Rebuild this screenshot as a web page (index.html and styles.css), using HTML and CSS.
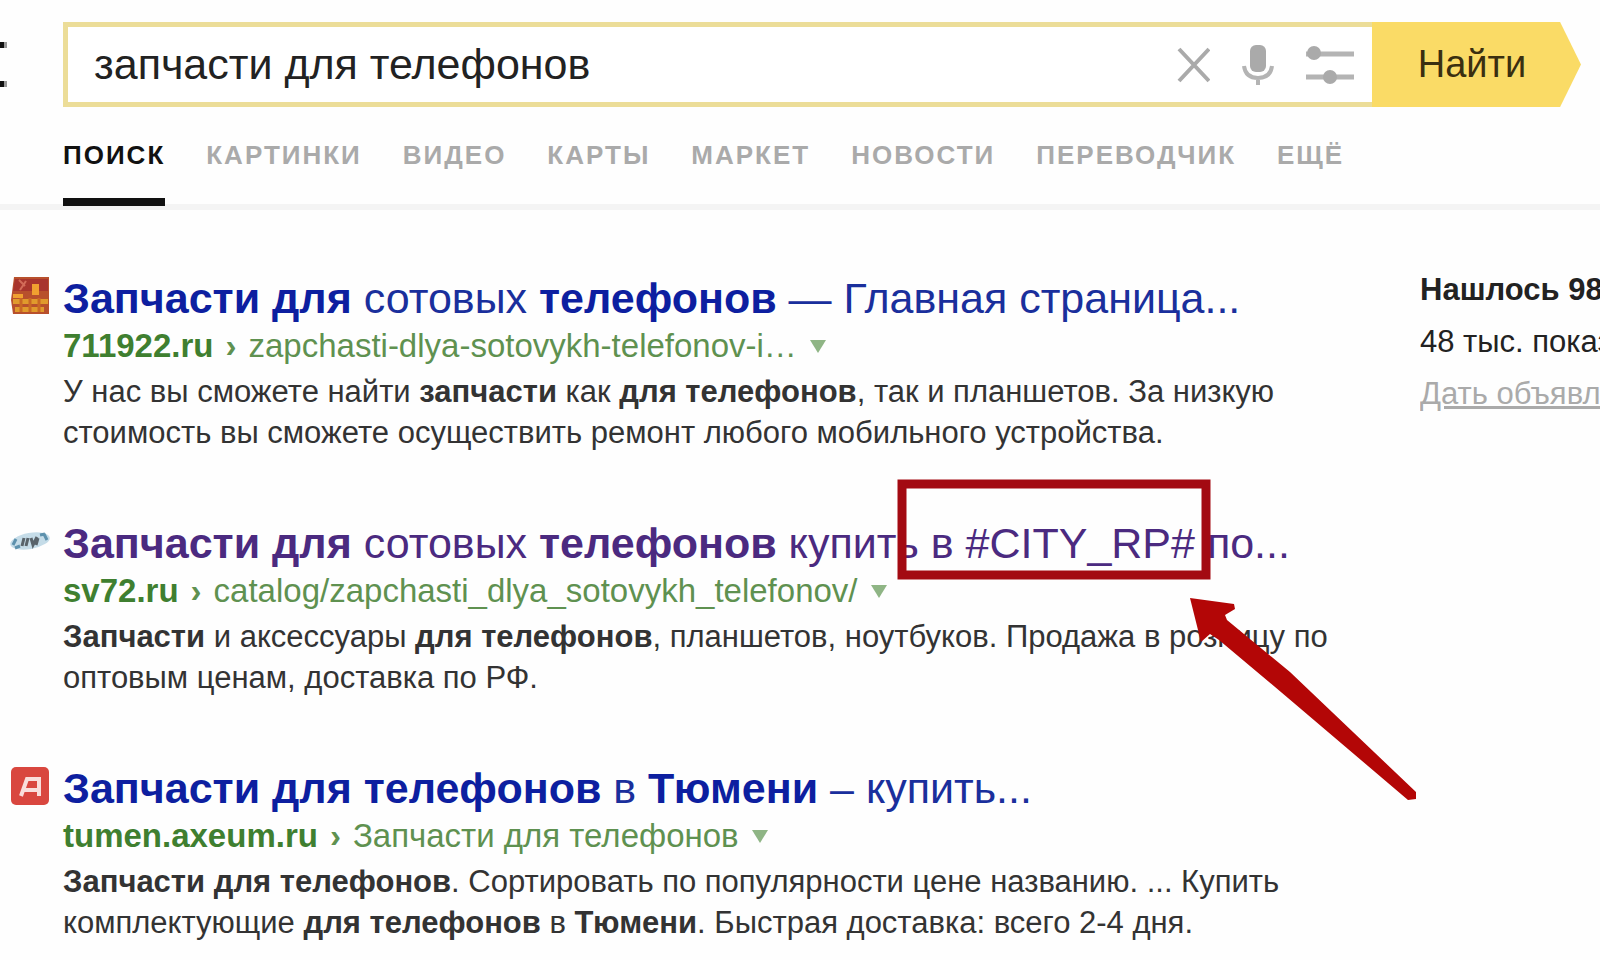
FILE: index.html
```html
<!DOCTYPE html>
<html lang="ru">
<head>
<meta charset="utf-8">
<title>запчасти для телефонов</title>
<link rel="stylesheet" href="styles.css">
</head>
<body>
<header class="header">
  <a class="logo" href="#" aria-label="Главная">
    <svg width="8" height="48" viewBox="0 0 8 48" aria-hidden="true"><path d="M0 1H4V7H0ZM0 40H4V46H0Z" fill="#111"/><path d="M4 1H7V7H4ZM4 40H7V46H4Z" fill="#999"/></svg>
  </a>
  <form class="search">
    <div class="search-box">
      <input class="search-input" type="text" aria-label="Запрос" value="запчасти для телефонов">
      <button class="icon-button" type="button" aria-label="Очистить">
        <svg width="34" height="42" viewBox="0 0 34 42"><path d="M3 5L33 37M33 5L3 37" stroke="#aaa" stroke-width="4" fill="none"/></svg>
      </button>
      <button class="icon-button" type="button" aria-label="Голосовой поиск">
        <svg width="32" height="42" viewBox="0 0 32 42"><rect x="8" y="1" width="16" height="27" rx="6" fill="#aaa"/><path d="M2 22C3 30 8 34 16 34S29 30 30 22M16 34V41" stroke="#b4b4b4" stroke-width="4" fill="none"/></svg>
      </button>
      <button class="icon-button" type="button" aria-label="Настройки">
        <svg width="48" height="42" viewBox="0 0 48 42"><path d="M0 10H48M0 33H48" stroke="#b4b4b4" stroke-width="5"/><circle cx="8" cy="9" r="7" fill="#aaa"/><circle cx="24" cy="33" r="7" fill="#aaa"/></svg>
      </button>
    </div>
    <button class="search-submit" type="submit">Найти</button>
  </form>
</header>
<nav class="tabs">
  <a class="tab tab-active" href="#">ПОИСК</a>
  <a class="tab" href="#">КАРТИНКИ</a>
  <a class="tab" href="#">ВИДЕО</a>
  <a class="tab" href="#">КАРТЫ</a>
  <a class="tab" href="#">МАРКЕТ</a>
  <a class="tab" href="#">НОВОСТИ</a>
  <a class="tab" href="#">ПЕРЕВОДЧИК</a>
  <a class="tab" href="#">ЕЩЁ</a>
</nav>
<div class="content">
  <main class="results">
    <article class="result">
      <svg class="favicon" width="40" height="40" viewBox="0 0 40 40" aria-hidden="true"><path d="M4 1H39V38H3L1 24Z" fill="#b8502c"/><path d="M5 3H38V15H3Z" fill="#a8352d"/><path d="M3 23H38V28H3ZM5 31H34V36H5Z" fill="#e09a2c"/><path d="M22 8H29V19H22ZM3 18H13V22H3Z" fill="#f0a030"/><path d="M11 22V36M20 22V36M29 22V36" stroke="#c96824" stroke-width="3"/><path d="M9 4L15 10M16 5L10 14" stroke="#d36b58" stroke-width="2"/></svg>
      <h2 class="title"><a href="#"><b>Запчасти для</b> сотовых <b>телефонов</b> — Главная страница...</a></h2>
      <p class="path"><a href="#"><b>711922.ru</b><span class="sep">›</span>zapchasti-dlya-sotovykh-telefonov-i…</a><button class="more" type="button" aria-label="Ещё"></button></p>
      <p class="snippet">У нас вы сможете найти <b>запчасти</b> как <b>для телефонов</b>, так и планшетов. За низкую<br>стоимость вы сможете осуществить ремонт любого мобильного устройства.</p>
    </article>
    <article class="result result-visited">
      <svg class="favicon" width="40" height="40" viewBox="0 0 40 40" aria-hidden="true"><ellipse cx="20" cy="20" rx="20" ry="8" fill="#c5dce8" transform="rotate(-10 20 20)"/><path d="M3 24L6 18M5 27L10 25M34 13L37 19M30 14L35 13" stroke="#5d91ad" stroke-width="3"/><path d="M14 17L12 25M18 17L16 25M21 17L23 24L27 16M28 17L26 24" stroke="#59636a" stroke-width="3" fill="none"/></svg>
      <h2 class="title"><a href="#"><b>Запчасти для</b> сотовых <b>телефонов</b> купить в #CITY_RP# по...</a></h2>
      <p class="path"><a href="#"><b>sv72.ru</b><span class="sep">›</span>catalog/zapchasti_dlya_sotovykh_telefonov/</a><button class="more" type="button" aria-label="Ещё"></button></p>
      <p class="snippet"><b>Запчасти</b> и аксессуары <b>для телефонов</b>, планшетов, ноутбуков. Продажа в розницу по<br>оптовым ценам, доставка по РФ.</p>
      <svg class="callout" width="524" height="324" viewBox="0 0 524 324" aria-hidden="true"><rect x="7" y="5" width="304" height="91" fill="none" stroke="#a30a12" stroke-width="9"/><path d="M295 119L339 125L340 130L330 136L332 141L395 193L521 313V320L513 321L393 219L324 161L315 155L306 163Z" fill="#b30606"/></svg>
    </article>
    <article class="result">
      <svg class="favicon" width="40" height="40" viewBox="0 0 40 40" aria-hidden="true"><rect x="1" y="1" width="38" height="38" rx="5" fill="#d9473f"/><path d="M11 30L17 13H29V30M14 24H28" stroke="#f9dedb" stroke-width="4" fill="none"/></svg>
      <h2 class="title"><a href="#"><b>Запчасти для телефонов</b> в <b>Тюмени</b> – купить...</a></h2>
      <p class="path"><a href="#"><b>tumen.axeum.ru</b><span class="sep">›</span>Запчасти для телефонов</a><button class="more" type="button" aria-label="Ещё"></button></p>
      <p class="snippet"><b>Запчасти для телефонов</b>. Сортировать по популярности цене названию. ... Купить<br>комплектующие <b>для телефонов</b> в <b>Тюмени</b>. Быстрая доставка: всего 2-4 дня.</p>
    </article>
  </main>
  <aside class="stats">
    <p><b>Нашлось 98</b></p>
    <p>48 тыс. показов</p>
    <p><a class="ad-link" href="#">Дать объявление</a></p>
  </aside>
</div>
</body>
</html>
```
FILE: styles.css
```css
* { box-sizing: border-box; }
body {
  margin: 0;
  background: #fefefe;
  color: #333;
  font-family: "Liberation Sans", Arial, sans-serif;
  overflow: hidden;
}
a { color: inherit; text-decoration: none; }
h2, p { margin: 0; font-weight: 400; }
button { border: 0; padding: 0; background: none; font: inherit; cursor: pointer; }
svg { display: block; }

.header {
  display: grid;
  grid-template-columns: 63px 1fr;
  align-items: center;
  padding: 22px 19px 0 0;
}
.search { display: flex; }
.search-box {
  flex: 1;
  display: flex;
  align-items: center;
  gap: 32px;
  height: 85px;
  padding: 0 18px 0 26px;
  background: #fff;
  border: 5px solid #ecdd98;
  border-right: 0;
}
.search-input {
  flex: 1;
  min-width: 0;
  border: 0;
  outline: 0;
  padding: 0;
  background: none;
  color: #222;
  font: 43px "Liberation Sans", Arial, sans-serif;
}
.search-submit {
  width: 209px;
  padding-right: 9px;
  background: #fadb66;
  clip-path: polygon(0 0, 90% 0, 100% 50%, 90% 100%, 0 100%);
  color: #3a2f10;
  font-size: 38px;
}

.tabs {
  display: flex;
  gap: 41px;
  margin-top: 30px;
  padding-left: 63px;
  border-bottom: 6px solid #f4f4f4;
}
.tab {
  height: 67px;
  color: #aaa;
  font-size: 26px;
  font-weight: 700;
  line-height: 36px;
  letter-spacing: 2px;
}
.tab-active {
  height: 69px;
  margin-bottom: -2px;
  border-bottom: 8px solid #111;
  color: #111;
}

.content {
  display: grid;
  grid-template-columns: minmax(0, 1360px) minmax(180px, 1fr);
  column-gap: 50px;
  padding: 54px 0 0 10px;
  white-space: nowrap;
}
.results { display: grid; gap: 64px; padding-top: 8px; }
.result {
  position: relative;
  display: grid;
  grid-template-columns: 40px 1fr;
  column-gap: 13px;
}
.favicon { margin-top: 4px; }
.title {
  color: #1a2f9c;
  font-size: 43px;
  line-height: 52px;
}
.title b { color: #0d1fa0; }
.result-visited .title, .result-visited .title b { color: #4b2a80; }
.path, .snippet { grid-column: 2; }
.path {
  display: flex;
  align-items: center;
  gap: 13px;
  color: #5f9150;
  font-size: 33px;
  line-height: 44px;
}
.path b { color: #3f7f30; }
.sep { margin: 0 12px; font-weight: 700; }
.more {
  border: 8px solid transparent;
  border-top: 13px solid #8fb585;
  border-bottom: 0;
}
.snippet { margin-top: 3px; font-size: 31px; line-height: 41px; }
.callout { position: absolute; left: 885px; top: -38px; }

.stats {
  color: #222;
  font-size: 31px;
  line-height: 52px;
  overflow: hidden;
}
.ad-link { color: #aaa; text-decoration: underline; }
```
